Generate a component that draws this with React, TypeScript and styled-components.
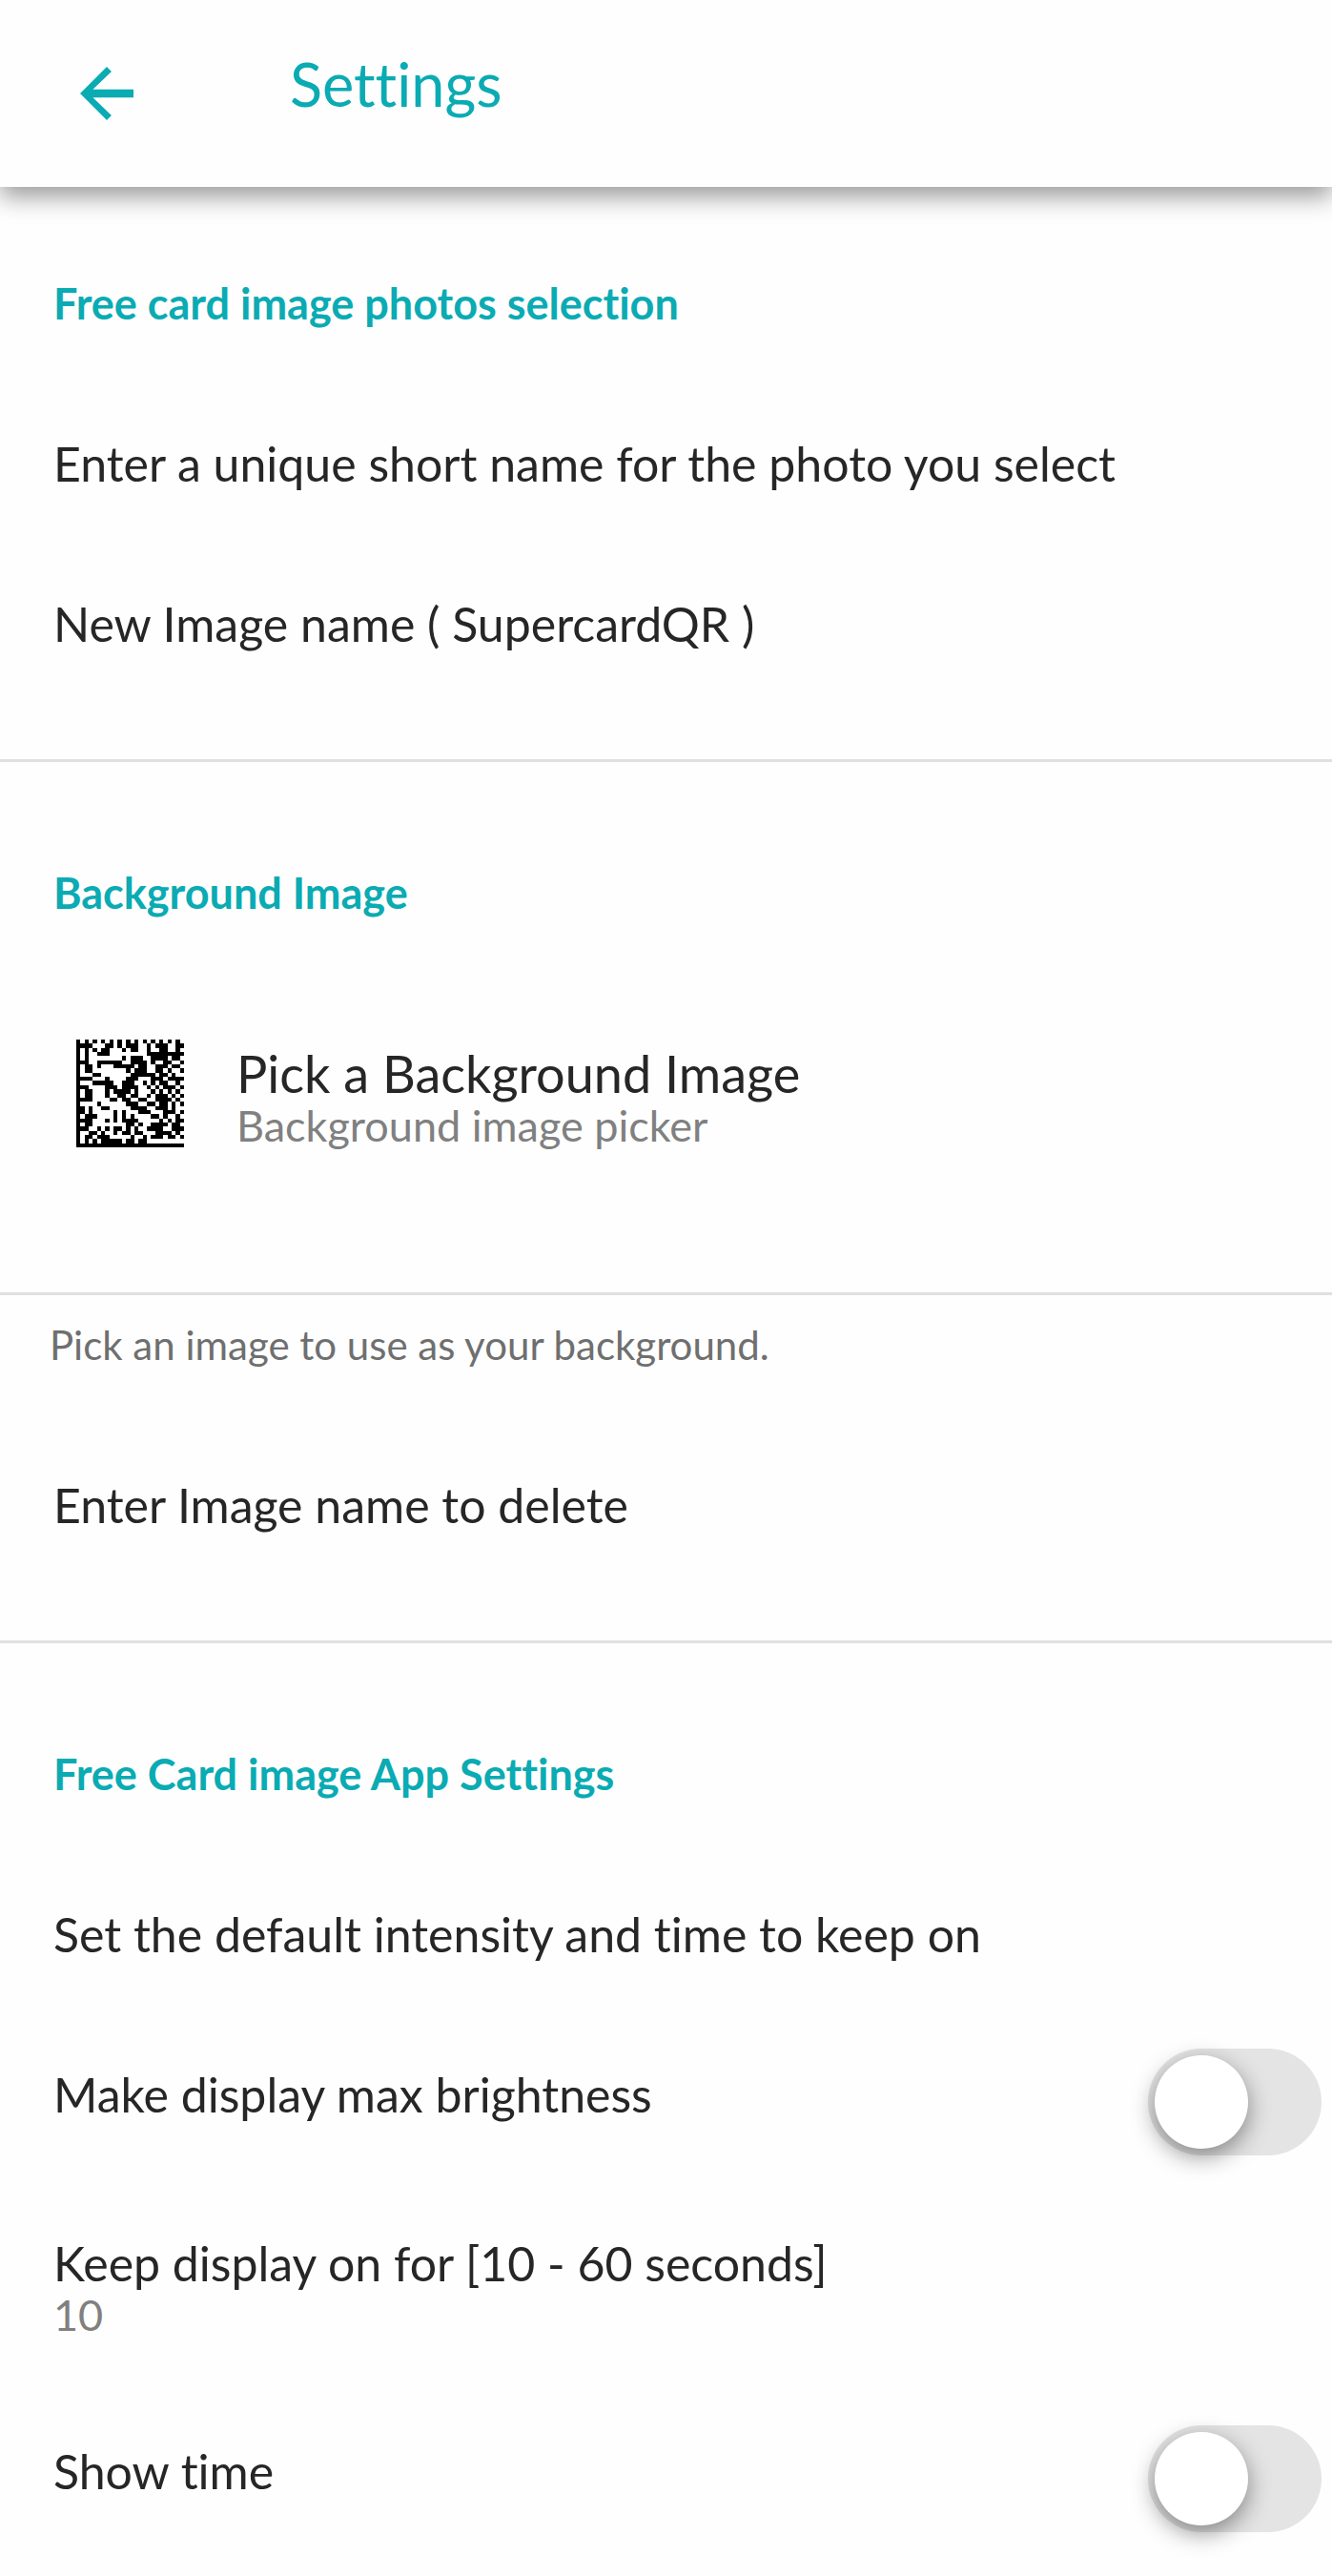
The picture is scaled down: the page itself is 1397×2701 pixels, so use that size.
import React from "react";
import styled, { createGlobalStyle, css } from "styled-components";

const teal = "#0aabb3";

const GlobalStyle = createGlobalStyle`
  * { box-sizing: border-box; }
  body {
    margin: 0;
    background: #fefefe;
    color: #262626;
    font-family: Lato, "Open Sans", sans-serif;
    font-variant-ligatures: none;
  }
`;

const Header = styled.header`
  display: flex;
  align-items: flex-start;
  height: 196px;
  padding: 52px 70px 0;
  gap: 150px;
  background: #fefefe;
  box-shadow: 0 10px 24px rgba(0, 0, 0, 0.4);
`;

const BackButton = styled.button`
  display: flex;
  padding: 4px 0 0;
  border: 0;
  background: none;
  color: ${teal};
  cursor: pointer;
`;

const Title = styled.h1`
  margin: 0;
  font-size: 63px;
  font-weight: 400;
  line-height: 72px;
  color: ${teal};
`;

const Section = styled.section<{ $first?: boolean }>`
  padding: ${(p) => (p.$first ? 38 : 53)}px 0 58px;
  & + & { border-top: 3px solid #e0e0e0; }
`;

const row = css`
  display: flex;
  align-items: center;
  width: 100%;
  min-height: 168px;
  margin: 0;
  padding: 0 11px 0 56px;
`;

const SectionTitle = styled.h2`
  ${row}
  font-size: 45px;
  font-weight: 700;
  line-height: 52px;
  color: ${teal};
`;

const TextRow = styled.p`
  ${row}
  font-size: 50px;
  line-height: 60px;
`;

const plainButton = css`
  border: 0;
  background: none;
  color: inherit;
  font-family: inherit;
  text-align: left;
  cursor: pointer;
`;

const ActionRow = styled.button`
  ${row}
  ${plainButton}
  font-size: 50px;
  line-height: 60px;
`;

const StackedRow = styled.button`
  ${plainButton}
  display: flex;
  flex-direction: column;
  width: 100%;
  padding: 63px 56px 56px;
`;

const PickerRow = styled.button`
  ${plainButton}
  display: flex;
  align-items: center;
  gap: 55px;
  width: 100%;
  padding: 68px 80px 93px;
`;

const Stack = styled.span`
  display: flex;
  flex-direction: column;
  padding-top: 8px;
`;

const Label = styled.span<{ $large?: boolean }>`
  font-size: ${(p) => (p.$large ? 54 : 50)}px;
  line-height: 60px;
`;

const Summary = styled.span`
  font-size: 45px;
  line-height: 48px;
  color: #808080;
`;

const Caption = styled.p`
  margin: 0;
  padding: 26px 52px 58px;
  font-size: 42px;
  line-height: 52px;
  color: #6f6f6f;
`;

const CaptionSection = styled(Section)`
  padding-top: 0;
`;

const SwitchRow = styled.label`
  ${row}
  justify-content: space-between;
  font-size: 50px;
  line-height: 60px;
  cursor: pointer;
`;

const Switch = styled.input`
  appearance: none;
  flex: none;
  display: flex;
  width: 182px;
  height: 112px;
  margin: 16px 0 0;
  padding: 7px;
  border-radius: 56px;
  background: #e4e4e4;
  cursor: pointer;

  &::before {
    content: "";
    width: 98px;
    height: 98px;
    border-radius: 50%;
    background: #fff;
    box-shadow: 0 8px 24px rgba(0, 0, 0, 0.42);
  }
  &:checked { background: ${teal}; justify-content: flex-end; }
`;

const MatrixSvg = styled.svg`
  flex: none;
  width: 113px;
  height: 113px;
  background: #fff;
`;

const modules = [
  "10101010101010101010101010",
  "11110001101011100101110011",
  "10101011000101100100110010",
  "10100111000000000111111111",
  "10100000000101110011110110",
  "11100111111001111010011001",
  "10110100011111011001110110",
  "10110000000010111001101001",
  "10001100000001111110110100",
  "11110001000011100011101111",
  "10001111100111001010110010",
  "11100001110111100101011101",
  "10110001011110100010101010",
  "10110001001101100101110101",
  "11110000110110011001111010",
  "10000100000011100110110101",
  "11010011000001111001110100",
  "11010000010100011100011101",
  "10111000010101000011010010",
  "11110001010111100000101011",
  "10110000000011010011110110",
  "11100101011010100111100111",
  "10011010010110110001111010",
  "10110111000001001011101101",
  "10101011111011011000000000",
  "11111111111111111111111111",
];

function DataMatrix() {
  return (
    <MatrixSvg viewBox="0 0 26 26" shapeRendering="crispEdges" aria-hidden="true">
      {modules.flatMap((line, y) =>
        Array.from(line.matchAll(/1+/g), (run) => (
          <rect key={`${run.index}-${y}`} x={run.index} y={y} width={run[0].length} height={1} fill="#000" />
        )),
      )}
    </MatrixSvg>
  );
}

function ArrowBack() {
  return (
    <svg width="84" height="84" viewBox="0 0 24 24" fill="currentColor" aria-hidden="true">
      <path d="M20 10.8H7.83l5.59-5.39L12 4l-8 8 8 8 1.41-1.41L7.83 13.2H20v-2.4z" />
    </svg>
  );
}

export default function App() {
  return (
    <>
      <GlobalStyle />
      <Header>
        <BackButton type="button" aria-label="Back">
          <ArrowBack />
        </BackButton>
        <Title>Settings</Title>
      </Header>
      <main>
        <Section $first>
          <SectionTitle>Free card image photos selection</SectionTitle>
          <TextRow>Enter a unique short name for the photo you select</TextRow>
          <ActionRow type="button">New Image name ( SupercardQR )</ActionRow>
        </Section>
        <Section>
          <SectionTitle>Background Image</SectionTitle>
          <PickerRow type="button">
            <DataMatrix />
            <Stack>
              <Label $large>Pick a Background Image</Label>
              <Summary>Background image picker</Summary>
            </Stack>
          </PickerRow>
        </Section>
        <CaptionSection>
          <Caption>Pick an image to use as your background.</Caption>
          <ActionRow type="button">Enter Image name to delete</ActionRow>
        </CaptionSection>
        <Section>
          <SectionTitle>Free Card image App Settings</SectionTitle>
          <TextRow>Set the default intensity and time to keep on</TextRow>
          <SwitchRow>
            Make display max brightness
            <Switch type="checkbox" />
          </SwitchRow>
          <StackedRow type="button">
            <Label>Keep display on for [10 - 60 seconds]</Label>
            <Summary>10</Summary>
          </StackedRow>
          <SwitchRow>
            Show time
            <Switch type="checkbox" />
          </SwitchRow>
        </Section>
      </main>
    </>
  );
}
